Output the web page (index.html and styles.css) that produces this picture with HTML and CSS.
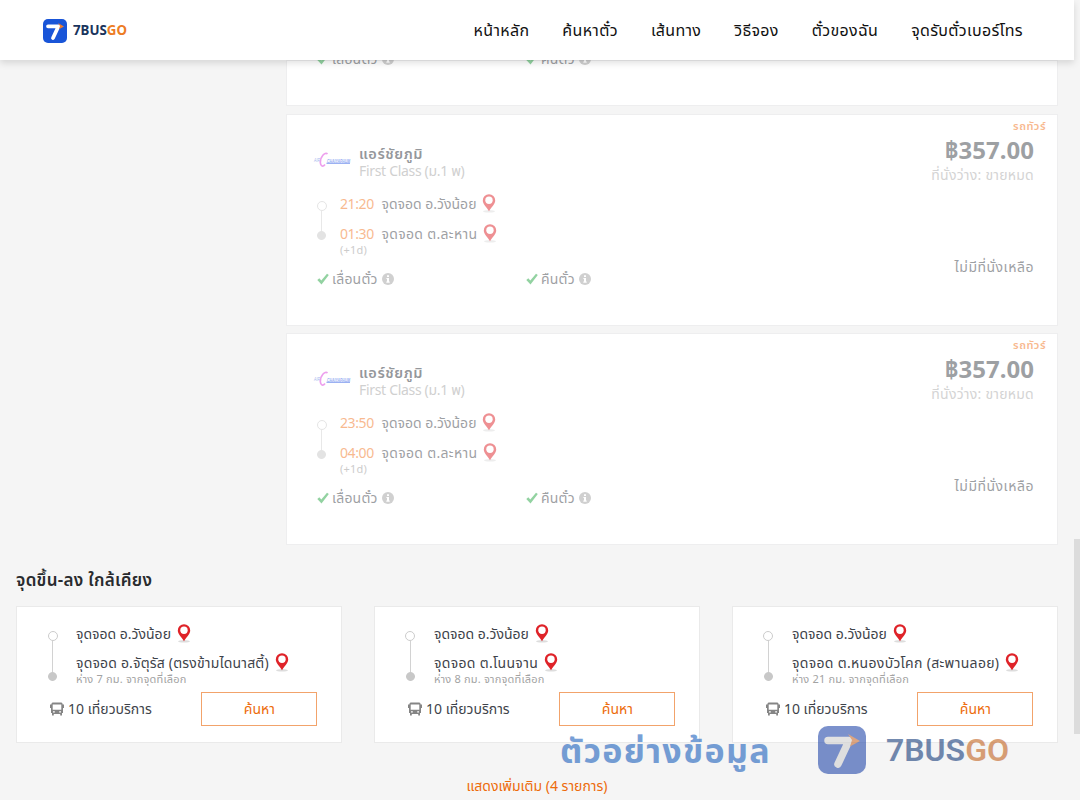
FILE: index.html
```html
<!DOCTYPE html>
<html lang="th">
<head>
<meta charset="utf-8">
<title>7BUSGO</title>
<link rel="stylesheet" href="styles.css">
</head>
<body>
<svg class="defs" aria-hidden="true">
  <symbol id="pin" viewBox="0 0 14 19"><ellipse cx="7" cy="17.3" rx="6" ry="1.200" fill="#ddd"/><path d="M7 .3A6.200 6.200 0 0 0 .8 6.500C.8 10 4.200 12.500 7 17.200C9.800 12.500 13.200 10 13.200 6.500A6.200 6.200 0 0 0 7 .3Z" fill="#df2329"/><circle cx="7" cy="6.300" r="3.700" fill="#fff"/></symbol>
  <symbol id="check" viewBox="0 0 12 12"><path d="M.3 7L2.300 5.200L4.300 7.400L10 .8L11.800 1.900L4.500 11.500Z" fill="#28a745"/></symbol>
  <symbol id="info" viewBox="0 0 12 12"><circle cx="6" cy="6" r="6" fill="#a2a2a2"/><path d="M5 2.200h2v1.700H5zM4.400 4.900H7v3.700h.7v1.100H4.300V8.600H5V6h-.6z" fill="#fff"/></symbol>
  <symbol id="bus" viewBox="0 0 14 14"><path d="M2.700.5h8.600Q12.500.5 12.700 2.500H14V6h-1v5h-1v2.500h-1.800V12H3.800v1.500H2V11H1V6H0V2.500h1.300Q1.500.5 2.700.5ZM2.700 2.500v5.300h8.600V2.500ZM3 9.200v1.200h1.800V9.200Zm6.200 0v1.200H11V9.200Z" fill="#858585" fill-rule="evenodd"/></symbol>
  <symbol id="mark" viewBox="0 0 48 48"><rect width="48" height="48" rx="10" fill="#1955d8"/><path d="M10 14.500H31L20 38" fill="none" stroke="#fff" stroke-width="7.500" stroke-linecap="round" stroke-linejoin="round"/><path d="M30 8L42 15L32 20.500L34 14Z" fill="#f07b2c"/></symbol>
  <symbol id="mark-muted" viewBox="0 0 48 48"><rect width="48" height="48" rx="10" fill="#2449ab"/><path d="M10 14.500H31L20 38" fill="none" stroke="#cfcfcf" stroke-width="7.500" stroke-linecap="round" stroke-linejoin="round"/><path d="M30 8L42 15L32 20.500L34 14Z" fill="#c56a30"/></symbol>
</svg>
<header class="header">
  <div class="logo"><svg class="logo-mark"><use href="#mark"/></svg><span class="brand">7BUS<span class="go">GO</span></span></div>
  <nav class="nav"><a>หน้าหลัก</a><a>ค้นหาตั๋ว</a><a>เส้นทาง</a><a>วิธีจอง</a><a>ตั๋วของฉัน</a><a>จุดรับตั๋วเบอร์โทร</a></nav>
</header>
<main>
  <section class="results">
    <article class="trip partial"><div class="policies"><span class="policy"><svg class="check"><use href="#check"/></svg>เลื่อนตั๋ว<svg class="info"><use href="#info"/></svg></span><span class="policy"><svg class="check"><use href="#check"/></svg>คืนตั๋ว<svg class="info"><use href="#info"/></svg></span></div></article>
    <article class="trip">
      <div class="details">
        <div class="operator"><svg class="op-logo" viewBox="0 0 37 16"><text x="0" y="10" class="op-air" textLength="6" lengthAdjust="spacingAndGlyphs">AIR</text><path d="M13.500 2C11 -.5 6 5 6.300 10.500C6.500 14.500 9 15 11 12.500" fill="none" stroke="#e052df" stroke-width="1.700"/><text x="13" y="10.500" class="op-name" textLength="23" lengthAdjust="spacingAndGlyphs">CHAIYAPHUM</text><path d="M12.500 11.300H36" stroke="#416be8" stroke-width="1.300"/></svg><div><div class="name">แอร์ชัยภูมิ</div><div class="class">First Class (ม.1 พ)</div></div></div>
        <div class="route"><div class="track"></div><div class="stops"><div class="stop"><span class="time">21:20</span><span class="place">จุดจอด อ.วังน้อย</span><svg class="pin"><use href="#pin"/></svg></div><div class="stop"><span class="time">01:30</span><span class="place loose">จุดจอด ต.ละหาน</span><svg class="pin"><use href="#pin"/></svg></div><div class="day">(+1d)</div></div></div>
        <div class="policies"><span class="policy"><svg class="check"><use href="#check"/></svg>เลื่อนตั๋ว<svg class="info"><use href="#info"/></svg></span><span class="policy"><svg class="check"><use href="#check"/></svg>คืนตั๋ว<svg class="info"><use href="#info"/></svg></span></div>
      </div>
      <div class="fare"><div class="tag">รถทัวร์</div><div class="price">฿357.00</div><div class="seats">ที่นั่งว่าง: ขายหมด</div><div class="none">ไม่มีที่นั่งเหลือ</div></div>
    </article>
    <article class="trip">
      <div class="details">
        <div class="operator"><svg class="op-logo" viewBox="0 0 37 16"><text x="0" y="10" class="op-air" textLength="6" lengthAdjust="spacingAndGlyphs">AIR</text><path d="M13.500 2C11 -.5 6 5 6.300 10.500C6.500 14.500 9 15 11 12.500" fill="none" stroke="#e052df" stroke-width="1.700"/><text x="13" y="10.500" class="op-name" textLength="23" lengthAdjust="spacingAndGlyphs">CHAIYAPHUM</text><path d="M12.500 11.300H36" stroke="#416be8" stroke-width="1.300"/></svg><div><div class="name">แอร์ชัยภูมิ</div><div class="class">First Class (ม.1 พ)</div></div></div>
        <div class="route"><div class="track"></div><div class="stops"><div class="stop"><span class="time">23:50</span><span class="place">จุดจอด อ.วังน้อย</span><svg class="pin"><use href="#pin"/></svg></div><div class="stop"><span class="time">04:00</span><span class="place loose">จุดจอด ต.ละหาน</span><svg class="pin"><use href="#pin"/></svg></div><div class="day">(+1d)</div></div></div>
        <div class="policies"><span class="policy"><svg class="check"><use href="#check"/></svg>เลื่อนตั๋ว<svg class="info"><use href="#info"/></svg></span><span class="policy"><svg class="check"><use href="#check"/></svg>คืนตั๋ว<svg class="info"><use href="#info"/></svg></span></div>
      </div>
      <div class="fare"><div class="tag">รถทัวร์</div><div class="price">฿357.00</div><div class="seats">ที่นั่งว่าง: ขายหมด</div><div class="none">ไม่มีที่นั่งเหลือ</div></div>
    </article>
  </section>
  <section class="nearby">
    <h2 class="heading">จุดขึ้น-ลง ใกล้เคียง</h2>
    <div class="cards">
      <article class="card"><div class="route"><div class="track"></div><div class="stops"><div class="stop"><span class="place">จุดจอด อ.วังน้อย</span><svg class="pin"><use href="#pin"/></svg></div><div class="stop"><span class="place roomy">จุดจอด อ.จัตุรัส (ตรงข้ามไดนาสตี้)</span><svg class="pin"><use href="#pin"/></svg></div><div class="distance">ห่าง 7 กม. จากจุดที่เลือก</div></div></div><div class="service"><svg class="bus"><use href="#bus"/></svg><span class="count">10 เที่ยวบริการ</span><button class="search">ค้นหา</button></div></article>
      <article class="card"><div class="route"><div class="track"></div><div class="stops"><div class="stop"><span class="place">จุดจอด อ.วังน้อย</span><svg class="pin"><use href="#pin"/></svg></div><div class="stop"><span class="place loose">จุดจอด ต.โนนจาน</span><svg class="pin"><use href="#pin"/></svg></div><div class="distance">ห่าง 8 กม. จากจุดที่เลือก</div></div></div><div class="service"><svg class="bus"><use href="#bus"/></svg><span class="count">10 เที่ยวบริการ</span><button class="search">ค้นหา</button></div></article>
      <article class="card"><div class="route"><div class="track"></div><div class="stops"><div class="stop"><span class="place">จุดจอด อ.วังน้อย</span><svg class="pin"><use href="#pin"/></svg></div><div class="stop"><span class="place loose">จุดจอด ต.หนองบัวโคก (สะพานลอย)</span><svg class="pin"><use href="#pin"/></svg></div><div class="distance">ห่าง 21 กม. จากจุดที่เลือก</div></div></div><div class="service"><svg class="bus"><use href="#bus"/></svg><span class="count">10 เที่ยวบริการ</span><button class="search">ค้นหา</button></div></article>
    </div>
    <div class="more"><a>แสดงเพิ่มเติม (4 รายการ)</a></div>
  </section>
</main>
<div class="watermark"><span class="sample">ตัวอย่างข้อมูล</span><svg class="big-mark"><use href="#mark-muted"/></svg><span class="big-brand">7BUS<span class="big-go">GO</span></span></div>
<div class="scroll-thumb"></div>
</body>
</html>
```
FILE: styles.css
```css
* { box-sizing: border-box; }
body { margin: 0; width: 1080px; height: 800px; overflow: hidden; background: #f5f5f5; color: #3e434a; font: 14px/20px "Noto Sans", "Noto Sans Thai", sans-serif; }
svg { display: block; flex: none; }
.defs { position: absolute; width: 0; height: 0; }
.header { position: relative; z-index: 2; width: 1074px; height: 60px; padding: 0 51px 0 43px; display: flex; align-items: center; justify-content: space-between; background: #fff; box-shadow: 0 3px 7px rgba(0,0,0,.13); }
.logo { display: flex; align-items: center; gap: 6px; }
.logo-mark { width: 24px; height: 24px; margin-top: 1px; }
.brand { color: #19345c; font: 700 13.300px/20px "Noto Sans", sans-serif; }
.go { color: #ed7c24; }
.nav { display: flex; gap: 33px; color: #111; font-size: 16px; letter-spacing: .33px; white-space: nowrap; }
.results { width: 772px; margin-left: 286px; display: flex; flex-direction: column; gap: 7.500px; }
.trip { height: 212px; display: flex; justify-content: space-between; background: #fff; box-shadow: inset 0 0 0 1px #eeeeef; white-space: nowrap; }
.partial { height: 46.300px; overflow: hidden; }
.details { padding: 30px 0 0 28px; }
.operator { height: 36px; display: flex; gap: 8px; opacity: .55; line-height: 18px; }
.op-logo { width: 37px; height: 16px; margin-top: 8px; overflow: visible; }
.op-air { font: italic 5px "Liberation Sans", sans-serif; fill: #5579e0; }
.op-name { font: italic bold 5px "Liberation Sans", sans-serif; fill: #416be8; }
.name { font-weight: 600; font-size: 14.500px; letter-spacing: .55px; }
.class { color: #aaa; letter-spacing: -.32px; }
.route { display: flex; }
.details .route { margin: 14px 0 0 3px; opacity: .5; }
.track { width: 9px; height: 39px; margin-top: 7px; display: flex; flex-direction: column; align-items: center; }
.track::before { content: ""; width: 8px; height: 8px; border: 1px solid #ccc; border-radius: 50%; }
.track::after { content: ""; width: 9px; flex: 1; background: radial-gradient(circle at 50% calc(100% - 4.500px), #c8c8c8 4px, transparent 4.800px), linear-gradient(#d2d2d2, #d2d2d2) center / 1px 100% no-repeat; }
.stops { padding-left: 14px; }
.stop { height: 30px; display: flex; line-height: 20px; }
.time { width: 41.500px; color: #f27622; letter-spacing: -.4px; }
.loose { letter-spacing: .32px; }
.roomy { letter-spacing: .18px; }
.pin { width: 14px; height: 19px; margin-left: 6px; }
.stop + .stop { height: 19px; }
.day { color: #999; font-size: 11px; line-height: 14px; letter-spacing: .2px; }
.policies { margin: 12px 0 0 3px; display: flex; opacity: .5; }
.partial .policies { margin: -11px 0 0 31px; height: 20px; }
.policy { width: 209px; display: flex; align-items: center; letter-spacing: .2px; }
.check { width: 12px; height: 12px; margin-right: 3px; }
.info { width: 12px; height: 12px; margin-left: 4px; }
.fare { padding: 4px 24px 0 0; text-align: right; opacity: .5; }
.tag { height: 15px; margin-right: -12px; color: #f27622; font-weight: 600; font-size: 11px; line-height: 16px; letter-spacing: .5px; }
.price { height: 34px; font-weight: 700; font-size: 24px; line-height: 34px; }
.seats { height: 14px; margin-top: 1px; color: #aaa; line-height: 14px; letter-spacing: .25px; }
.none { margin-top: 75px; letter-spacing: .5px; }
.nearby { padding: 25px 0 0 16px; }
.heading { margin: 0; font-size: 17px; line-height: 20px; font-weight: 600; letter-spacing: .3px; color: #292b2e; }
.cards { margin-top: 15.700px; display: grid; grid-template-columns: repeat(3, 326.400px); gap: 31.600px; }
.card { height: 137px; padding: 17px 24px 0 31px; border: 1px solid #eaeaea; background: #fff; white-space: nowrap; }
.card .track { height: 50px; }
.card .stops { padding-left: 19px; }
.card .stop { height: 29px; }
.card .stop + .stop { height: 18px; }
.distance { color: #a3a3a3; font-size: 11px; line-height: 16px; letter-spacing: .2px; }
.service { margin-top: 5px; height: 34px; display: flex; align-items: center; }
.bus { width: 14px; height: 14px; margin: 0 4px 0 2px; }
.search { margin-left: auto; width: 116px; height: 34px; padding: 0; border: 1px solid #f2a36b; background: #fff; color: #ed6b0b; font: inherit; }
.more { margin: 33px 22px 0 0; text-align: center; color: #ed6b0b; }
.watermark { position: absolute; z-index: 3; left: 560px; top: 726px; height: 48px; display: flex; align-items: center; white-space: nowrap; opacity: .6; }
.sample { width: 210px; color: #1e62bd; font-weight: 700; font-size: 34px; line-height: 48px; letter-spacing: 1.300px; }
.big-mark { width: 48px; height: 48px; margin-left: 48px; }
.big-brand { margin-left: 20px; font: 600 32px/48px Roboto, sans-serif; color: #173d7b; }
.big-go { color: #c3631f; }
.scroll-thumb { position: absolute; right: 0; top: 539px; width: 6px; height: 195px; background: #dcdcdc; }
```
